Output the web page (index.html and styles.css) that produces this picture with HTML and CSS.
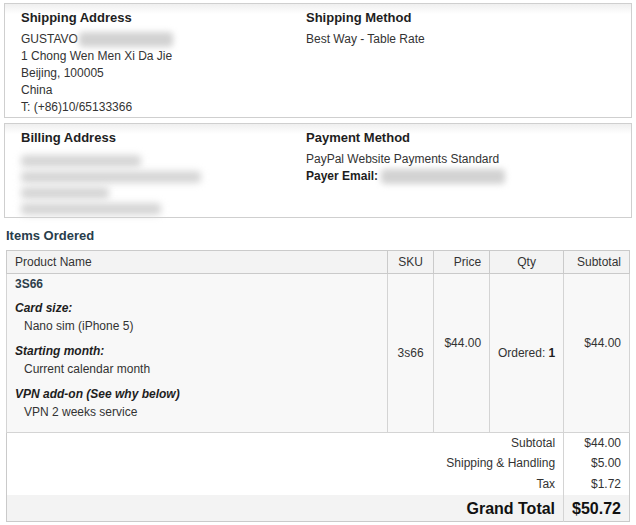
FILE: index.html
```html
<!DOCTYPE html>
<html>
<head>
<meta charset="utf-8">
<link rel="stylesheet" href="styles.css">
</head>
<body>
<div class="page">
  <div class="box">
    <div class="col">
      <h3>Shipping Address</h3>
      <div class="line">GUSTAVO <span class="blur w94"></span></div>
      <div class="line">1 Chong Wen Men Xi Da Jie</div>
      <div class="line">Beijing, 100005</div>
      <div class="line">China</div>
      <div class="line">T: (+86)10/65133366</div>
    </div>
    <div class="col col2">
      <h3>Shipping Method</h3>
      <div class="line">Best Way - Table Rate</div>
    </div>
  </div>
  <div class="box box-b">
    <div class="col">
      <h3>Billing Address</h3>
      <div class="blurlines">
        <span class="blur b1"></span>
        <span class="blur b2"></span>
        <span class="blur b3"></span>
        <span class="blur b4"></span>
      </div>
    </div>
    <div class="col col2">
      <h3>Payment Method</h3>
      <div class="line">PayPal Website Payments Standard</div>
      <div class="line"><b>Payer Email:</b> <span class="blur w124"></span></div>
    </div>
  </div>
  <h2 class="items-title">Items Ordered</h2>
  <table class="items">
    <thead>
      <tr>
        <th class="c-name">Product Name</th>
        <th class="c-sku">SKU</th>
        <th class="c-price">Price</th>
        <th class="c-qty">Qty</th>
        <th class="c-sub">Subtotal</th>
      </tr>
    </thead>
    <tbody>
      <tr>
        <td class="c-name">
          <div class="pname">3S66</div>
          <dl class="opts">
            <dt>Card size:</dt>
            <dd>Nano sim (iPhone 5)</dd>
            <dt>Starting month:</dt>
            <dd>Current calendar month</dd>
            <dt>VPN add-on (See why below)</dt>
            <dd>VPN 2 weeks service</dd>
          </dl>
        </td>
        <td class="c-sku">3s66</td>
        <td class="c-price raised">$44.00</td>
        <td class="c-qty">Ordered: <b>1</b></td>
        <td class="c-sub raised">$44.00</td>
      </tr>
    </tbody>
    <tfoot>
      <tr class="first">
        <td colspan="4" class="lbl">Subtotal</td>
        <td class="val">$44.00</td>
      </tr>
      <tr>
        <td colspan="4" class="lbl">Shipping &amp; Handling</td>
        <td class="val">$5.00</td>
      </tr>
      <tr>
        <td colspan="4" class="lbl">Tax</td>
        <td class="val">$1.72</td>
      </tr>
      <tr class="grand">
        <td colspan="4" class="lbl">Grand Total</td>
        <td class="val">$50.72</td>
      </tr>
    </tfoot>
  </table>
</div>
</body>
</html>
```
FILE: styles.css
```css
* { box-sizing: border-box; }
html, body { margin: 0; padding: 0; background: #fff; }
body {
  font-family: Arial, "Liberation Sans", sans-serif;
  font-size: 12px;
  color: #333;
}
.page {
  padding: 3px 4px 0 4px;
  width: 636px;
}
.box {
  display: flex;
  border: 1px solid #cfcfcf;
  background: linear-gradient(#efefef 0, #fff 10px);
  height: 115px;
}
.box-b {
  margin-top: 5px;
  height: 95px;
}
.col {
  width: 301px;
  padding: 6px 0 0 16px;
}
.col2 {
  padding-left: 0;
  width: auto;
  flex: 1;
}
h3 {
  margin: 0 0 5px 0;
  font-size: 13px;
  font-weight: bold;
  color: #1e1e1e;
  line-height: 16px;
}
.line {
  line-height: 17px;
  height: 17px;
}
.line b { color: #1e1e1e; }
.blur {
  display: inline-block;
  vertical-align: middle;
  height: 15px;
  background: #d2d2d2;
  filter: blur(3px);
  border-radius: 4px;
}
.w94 { width: 94px; margin-left: -2px; }
.w124 { width: 124px; }
.blurlines {
  display: flex;
  flex-direction: column;
  gap: 4px;
  padding-top: 4px;
}
.blurlines .blur { height: 12px; background: #d6d6d6; filter: blur(3.5px); }
.b1 { width: 120px; }
.b2 { width: 180px; }
.b3 { width: 88px; }
.b4 { width: 140px; }
.items-title {
  margin: 10px 0 6px 2px;
  font-size: 13px;
  font-weight: bold;
  color: #283d4b;
  line-height: 16px;
}
.items {
  margin-left: 2px;
  width: 624px;
  border-collapse: collapse;
  border: 1px solid #cacaca;
}
.items th {
  font-weight: normal;
  background: #f3f3f3;
  height: 23px;
  padding: 0 8px;
  border: 1px solid #cacaca;
  text-align: center;
  color: #333;
}
.items th.c-name { text-align: left; padding-left: 8px; }
.items th.c-price, .items th.c-sub { text-align: right; }
.items tbody td {
  background: #f8f8f8;
  border: 1px solid #d4d4d4;
  vertical-align: middle;
  padding: 0 8px;
}
.items td.c-name { width: 382px; padding: 2px 8px 11px 8px; vertical-align: top; }
.c-sku { width: 46px; text-align: center; }
.c-price { width: 56px; text-align: right; }
.c-qty { width: 74px; text-align: center; white-space: nowrap; }
.items tbody td.c-qty { padding: 0 2px; }
.c-sub { text-align: right; }
.items tbody td.c-sku { text-align: center; padding: 0 4px; }
.items tbody td.raised { padding-bottom: 20px; }
.items td b { color: #1e1e1e; }
.pname {
  font-weight: bold;
  color: #2d3e4b;
  line-height: 16px;
}
.opts { margin: 0; }
.opts dt {
  font-style: italic;
  font-weight: bold;
  color: #1e1e1e;
  margin-top: 8px;
  line-height: 17px;
}
.opts dd {
  margin: 0 0 0 9px;
  line-height: 18px;
}
.items tfoot td {
  background: #fff;
  padding: 0 8px;
  height: 21px;
  text-align: right;
}
.items tfoot td.val { border-left: 1px solid #d4d4d4; }
.items tfoot tr.first td { height: 20px; padding-top: 1px; }
.items tfoot tr.grand td {
  background: #f3f3f3;
  height: 27px;
  font-size: 16px;
  font-weight: bold;
  color: #111;
  padding-top: 2px;
}
```
